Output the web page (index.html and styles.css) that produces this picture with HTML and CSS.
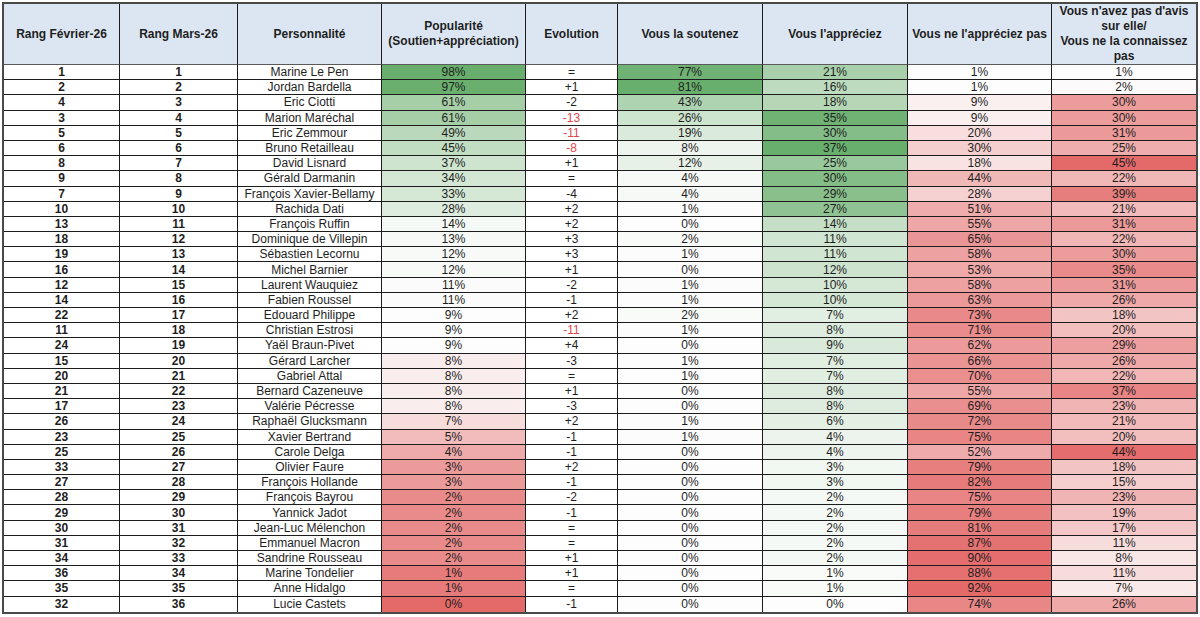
FILE: index.html
```html
<!DOCTYPE html>
<html lang="fr">
<head>
<meta charset="utf-8">
<title>Baromètre des personnalités</title>
<link rel="stylesheet" href="styles.css">
</head>
<body>
<div class="sheet">
<table class="grid">
<colgroup>
<col class="w-feb"><col class="w-mar"><col class="w-name"><col class="w-pop"><col class="w-evo"><col class="w-sout"><col class="w-appr"><col class="w-napp"><col class="w-avis">
</colgroup>
<thead>
<tr>
<th>Rang Février-26</th>
<th>Rang Mars-26</th>
<th>Personnalité</th>
<th>Popularité<br>(Soutien+appréciation)</th>
<th>Evolution</th>
<th>Vous la soutenez</th>
<th>Vous l'appréciez</th>
<th>Vous ne l'appréciez pas</th>
<th class="last">Vous n'avez pas d'avis<br>sur elle/<br>Vous ne la connaissez<br>pas</th>
</tr>
</thead>
<tbody>
<tr><td class="rk">1</td><td class="rk">1</td><td>Marine Le Pen</td><td class="pop">98%</td><td>=</td><td class="sout">77%</td><td class="appr">21%</td><td class="napp">1%</td><td class="avis">1%</td></tr>
<tr><td class="rk">2</td><td class="rk">2</td><td>Jordan Bardella</td><td class="pop">97%</td><td>+1</td><td class="sout">81%</td><td class="appr">16%</td><td class="napp">1%</td><td class="avis">2%</td></tr>
<tr><td class="rk">4</td><td class="rk">3</td><td>Eric Ciotti</td><td class="pop">61%</td><td>-2</td><td class="sout">43%</td><td class="appr">18%</td><td class="napp">9%</td><td class="avis">30%</td></tr>
<tr><td class="rk">3</td><td class="rk">4</td><td>Marion Maréchal</td><td class="pop">61%</td><td class="neg">-13</td><td class="sout">26%</td><td class="appr">35%</td><td class="napp">9%</td><td class="avis">30%</td></tr>
<tr><td class="rk">5</td><td class="rk">5</td><td>Eric Zemmour</td><td class="pop">49%</td><td class="neg">-11</td><td class="sout">19%</td><td class="appr">30%</td><td class="napp">20%</td><td class="avis">31%</td></tr>
<tr><td class="rk">6</td><td class="rk">6</td><td>Bruno Retailleau</td><td class="pop">45%</td><td class="neg">-8</td><td class="sout">8%</td><td class="appr">37%</td><td class="napp">30%</td><td class="avis">25%</td></tr>
<tr><td class="rk">8</td><td class="rk">7</td><td>David Lisnard</td><td class="pop">37%</td><td>+1</td><td class="sout">12%</td><td class="appr">25%</td><td class="napp">18%</td><td class="avis">45%</td></tr>
<tr><td class="rk">9</td><td class="rk">8</td><td>Gérald Darmanin</td><td class="pop">34%</td><td>=</td><td class="sout">4%</td><td class="appr">30%</td><td class="napp">44%</td><td class="avis">22%</td></tr>
<tr><td class="rk">7</td><td class="rk">9</td><td>François Xavier-Bellamy</td><td class="pop">33%</td><td>-4</td><td class="sout">4%</td><td class="appr">29%</td><td class="napp">28%</td><td class="avis">39%</td></tr>
<tr><td class="rk">10</td><td class="rk">10</td><td>Rachida Dati</td><td class="pop">28%</td><td>+2</td><td class="sout">1%</td><td class="appr">27%</td><td class="napp">51%</td><td class="avis">21%</td></tr>
<tr><td class="rk">13</td><td class="rk">11</td><td>François Ruffin</td><td class="pop">14%</td><td>+2</td><td class="sout">0%</td><td class="appr">14%</td><td class="napp">55%</td><td class="avis">31%</td></tr>
<tr><td class="rk">18</td><td class="rk">12</td><td>Dominique de Villepin</td><td class="pop">13%</td><td>+3</td><td class="sout">2%</td><td class="appr">11%</td><td class="napp">65%</td><td class="avis">22%</td></tr>
<tr><td class="rk">19</td><td class="rk">13</td><td>Sébastien Lecornu</td><td class="pop">12%</td><td>+3</td><td class="sout">1%</td><td class="appr">11%</td><td class="napp">58%</td><td class="avis">30%</td></tr>
<tr><td class="rk">16</td><td class="rk">14</td><td>Michel Barnier</td><td class="pop">12%</td><td>+1</td><td class="sout">0%</td><td class="appr">12%</td><td class="napp">53%</td><td class="avis">35%</td></tr>
<tr><td class="rk">12</td><td class="rk">15</td><td>Laurent Wauquiez</td><td class="pop">11%</td><td>-2</td><td class="sout">1%</td><td class="appr">10%</td><td class="napp">58%</td><td class="avis">31%</td></tr>
<tr><td class="rk">14</td><td class="rk">16</td><td>Fabien Roussel</td><td class="pop">11%</td><td>-1</td><td class="sout">1%</td><td class="appr">10%</td><td class="napp">63%</td><td class="avis">26%</td></tr>
<tr><td class="rk">22</td><td class="rk">17</td><td>Edouard Philippe</td><td class="pop">9%</td><td>+2</td><td class="sout">2%</td><td class="appr">7%</td><td class="napp">73%</td><td class="avis">18%</td></tr>
<tr><td class="rk">11</td><td class="rk">18</td><td>Christian Estrosi</td><td class="pop">9%</td><td class="neg">-11</td><td class="sout">1%</td><td class="appr">8%</td><td class="napp">71%</td><td class="avis">20%</td></tr>
<tr><td class="rk">24</td><td class="rk">19</td><td>Yaël Braun-Pivet</td><td class="pop">9%</td><td>+4</td><td class="sout">0%</td><td class="appr">9%</td><td class="napp">62%</td><td class="avis">29%</td></tr>
<tr><td class="rk">15</td><td class="rk">20</td><td>Gérard Larcher</td><td class="pop">8%</td><td>-3</td><td class="sout">1%</td><td class="appr">7%</td><td class="napp">66%</td><td class="avis">26%</td></tr>
<tr><td class="rk">20</td><td class="rk">21</td><td>Gabriel Attal</td><td class="pop">8%</td><td>=</td><td class="sout">1%</td><td class="appr">7%</td><td class="napp">70%</td><td class="avis">22%</td></tr>
<tr><td class="rk">21</td><td class="rk">22</td><td>Bernard Cazeneuve</td><td class="pop">8%</td><td>+1</td><td class="sout">0%</td><td class="appr">8%</td><td class="napp">55%</td><td class="avis">37%</td></tr>
<tr><td class="rk">17</td><td class="rk">23</td><td>Valérie Pécresse</td><td class="pop">8%</td><td>-3</td><td class="sout">0%</td><td class="appr">8%</td><td class="napp">69%</td><td class="avis">23%</td></tr>
<tr><td class="rk">26</td><td class="rk">24</td><td>Raphaël Glucksmann</td><td class="pop">7%</td><td>+2</td><td class="sout">1%</td><td class="appr">6%</td><td class="napp">72%</td><td class="avis">21%</td></tr>
<tr><td class="rk">23</td><td class="rk">25</td><td>Xavier Bertrand</td><td class="pop">5%</td><td>-1</td><td class="sout">1%</td><td class="appr">4%</td><td class="napp">75%</td><td class="avis">20%</td></tr>
<tr><td class="rk">25</td><td class="rk">26</td><td>Carole Delga</td><td class="pop">4%</td><td>-1</td><td class="sout">0%</td><td class="appr">4%</td><td class="napp">52%</td><td class="avis">44%</td></tr>
<tr><td class="rk">33</td><td class="rk">27</td><td>Olivier Faure</td><td class="pop">3%</td><td>+2</td><td class="sout">0%</td><td class="appr">3%</td><td class="napp">79%</td><td class="avis">18%</td></tr>
<tr><td class="rk">27</td><td class="rk">28</td><td>François Hollande</td><td class="pop">3%</td><td>-1</td><td class="sout">0%</td><td class="appr">3%</td><td class="napp">82%</td><td class="avis">15%</td></tr>
<tr><td class="rk">28</td><td class="rk">29</td><td>François Bayrou</td><td class="pop">2%</td><td>-2</td><td class="sout">0%</td><td class="appr">2%</td><td class="napp">75%</td><td class="avis">23%</td></tr>
<tr><td class="rk">29</td><td class="rk">30</td><td>Yannick Jadot</td><td class="pop">2%</td><td>-1</td><td class="sout">0%</td><td class="appr">2%</td><td class="napp">79%</td><td class="avis">19%</td></tr>
<tr><td class="rk">30</td><td class="rk">31</td><td>Jean-Luc Mélenchon</td><td class="pop">2%</td><td>=</td><td class="sout">0%</td><td class="appr">2%</td><td class="napp">81%</td><td class="avis">17%</td></tr>
<tr><td class="rk">31</td><td class="rk">32</td><td>Emmanuel Macron</td><td class="pop">2%</td><td>=</td><td class="sout">0%</td><td class="appr">2%</td><td class="napp">87%</td><td class="avis">11%</td></tr>
<tr><td class="rk">34</td><td class="rk">33</td><td>Sandrine Rousseau</td><td class="pop">2%</td><td>+1</td><td class="sout">0%</td><td class="appr">2%</td><td class="napp">90%</td><td class="avis">8%</td></tr>
<tr><td class="rk">36</td><td class="rk">34</td><td>Marine Tondelier</td><td class="pop">1%</td><td>+1</td><td class="sout">0%</td><td class="appr">1%</td><td class="napp">88%</td><td class="avis">11%</td></tr>
<tr><td class="rk">35</td><td class="rk">35</td><td>Anne Hidalgo</td><td class="pop">1%</td><td>=</td><td class="sout">0%</td><td class="appr">1%</td><td class="napp">92%</td><td class="avis">7%</td></tr>
<tr class="lastrow"><td class="rk">32</td><td class="rk">36</td><td>Lucie Castets</td><td class="pop">0%</td><td>-1</td><td class="sout">0%</td><td class="appr">0%</td><td class="napp">74%</td><td class="avis">26%</td></tr>
</tbody>
</table>
</div>
<script src="script.js"></script>
</body>
</html>
```

FILE: styles.css
```css
* { box-sizing: border-box; }

html, body {
  margin: 0;
  padding: 0;
  background: #ffffff;
}

.sheet {
  padding: 2px 2px 0 2px;
}

.grid {
  width: 1196px;
  table-layout: fixed;
  border-collapse: separate;
  border-spacing: 0;
  border: 2px solid #4a4a4a;
  font-family: "Liberation Sans", Arial, sans-serif;
  font-size: 12px;
  color: #1e1e1e;
}

.w-feb { width: 116px; }
.w-mar { width: 118px; }
.w-name { width: 144px; }
.w-pop { width: 144px; }
.w-evo { width: 92px; }
.w-sout { width: 145px; }
.w-appr { width: 145px; }
.w-napp { width: 144px; }
.w-avis { width: 144px; }

.grid th,
.grid td {
  padding: 0;
  text-align: center;
  vertical-align: middle;
  border-right: 1px solid #1c1c1c;
  border-bottom: 1px solid #1c1c1c;
  white-space: nowrap;
  overflow: hidden;
}

.grid th:last-child,
.grid td:last-child {
  border-right: none;
}

.grid thead tr {
  height: 60px;
}

.grid th {
  background: #dce6f2;
  font-weight: bold;
  line-height: 15px;
  border-bottom-color: #5a5a5a;
}

.grid tbody tr {
  height: 15.2px;
}

.grid td {
  line-height: 13px;
  height: 15.2px;
  padding-top: 1px;
}

.grid tr.lastrow td {
  border-bottom: none;
}

.grid td.rk {
  font-weight: bold;
}

.grid td.neg {
  color: #e0474c;
}
```

FILE: script.js
```js
(function () {
  var WHITE = [253, 253, 253];
  var GREEN = [104, 174, 108];
  var RED = [228, 106, 106];

  function mix(a, b, t) {
    t = Math.max(0, Math.min(1, t));
    return a.map(function (v, i) { return Math.round(v + (b[i] - v) * t); });
  }

  function scale(cls, mode) {
    var cells = Array.prototype.slice.call(document.querySelectorAll('td.' + cls));
    var vals = cells.map(function (c) { return parseFloat(c.textContent); });
    var min = Math.min.apply(null, vals);
    var max = Math.max.apply(null, vals);
    var s = vals.slice().sort(function (a, b) { return a - b; });
    var n = s.length;
    var med = n % 2 ? s[(n - 1) / 2] : (s[n / 2 - 1] + s[n / 2]) / 2;
    cells.forEach(function (c, i) {
      var v = vals[i], col;
      if (mode === 'rwg') {
        col = v >= med ? mix(WHITE, GREEN, (v - med) / (max - med))
                       : mix(WHITE, RED, (med - v) / (med - min));
      } else if (mode === 'g') {
        col = mix(WHITE, GREEN, (v - min) / (max - min));
      } else {
        col = mix(WHITE, RED, (v - min) / (max - min));
      }
      c.style.backgroundColor = 'rgb(' + col.join(',') + ')';
    });
  }

  scale('pop', 'rwg');
  scale('sout', 'g');
  scale('appr', 'g');
  scale('napp', 'r');
  scale('avis', 'r');
})();
```
